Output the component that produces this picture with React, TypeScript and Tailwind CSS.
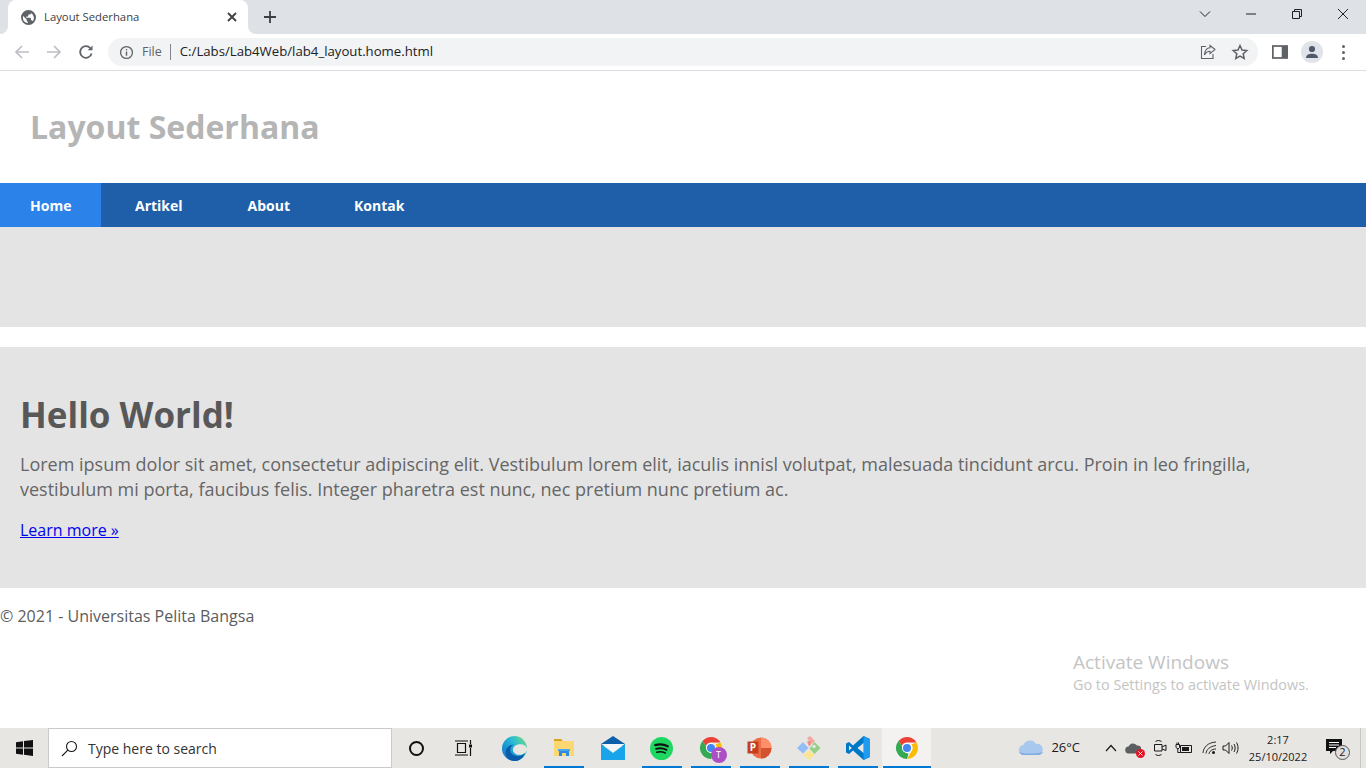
import { useId, type ReactNode } from 'react'

const uiFont = "font-['Open_Sans','Noto_Sans',sans-serif]"

function TabFlare({ flip }: { flip?: boolean }) {
  return (
    <svg width="8" height="8" viewBox="0 0 8 8" className={`absolute bottom-0 ${flip ? 'left-full -scale-x-100' : 'right-full'}`}>
      <path d="M8 0v8H0a8 8 0 0 0 8-8z" fill="#fff" />
    </svg>
  )
}

function TitleBar() {
  return (
    <div className="flex h-[34px] items-end bg-[#dee1e6] pl-2">
      <div className="relative flex h-[34px] w-[240px] items-center rounded-t-lg bg-white pl-[13px] pr-[8px]">
        <TabFlare />
        <TabFlare flip />
        <svg width="15" height="15" viewBox="0 0 16 16" fill="#5f6368">
          <path d="M8 0a8 8 0 1 0 0 16A8 8 0 0 0 8 0zM2 8c0-.6.1-1.2.3-1.7L6 10v1c0 .8.6 1.4 1.300 1.400v1.500A6 6 0 0 1 2 8zm10.600 3.900c-.2-.6-.7-1-1.300-1h-.7V9c0-.4-.3-.7-.7-.7H5.700V7h1.400c.4 0 .7-.3.700-.7V4.900h1.400c.8 0 1.400-.6 1.400-1.400v-.3a6 6 0 0 1 2 8.700z" />
        </svg>
        <span className="ml-2 flex-1 text-[11.300px] text-[#3c4043]">Layout Sederhana</span>
        <svg width="16" height="16" viewBox="0 0 16 16" stroke="#3c4043" strokeWidth="1.800" fill="none">
          <path d="M4 4l8 8M12 4l-8 8" />
        </svg>
      </div>
      <div className="ml-[14px] flex h-[34px] items-center">
        <svg width="16" height="16" viewBox="0 0 16 16" stroke="#3c4043" strokeWidth="1.800" fill="none">
          <path d="M8 2v12M2 8h12" />
        </svg>
      </div>
      <div className="ml-auto flex h-[34px] items-start text-[#3c4043]">
        <WinButton>
          <path d="M1 3.500l5 5 5-5" />
        </WinButton>
        <WinButton>
          <path d="M1 6h10" />
        </WinButton>
        <WinButton>
          <path d="M1.500 3.500h7v7h-7zM3.500 3.500v-2h7v7h-2" />
        </WinButton>
        <WinButton>
          <path d="M1 1l10 10M11 1L1 11" />
        </WinButton>
      </div>
    </div>
  )
}

function WinButton({ children }: { children: ReactNode }) {
  return (
    <div className="flex h-[28px] w-[46px] items-center justify-center">
      <svg width="12" height="12" viewBox="0 0 12 12" fill="none" stroke="#202124" strokeWidth="1">
        {children}
      </svg>
    </div>
  )
}

function ToolbarIcon({ children }: { children: ReactNode }) {
  return <div className="flex h-8 w-8 items-center justify-center">{children}</div>
}

function Toolbar() {
  return (
    <div className="flex h-[37px] items-center border-b border-[#dcdde0] bg-white pl-[6px]">
      <ToolbarIcon>
        <svg width="16" height="16" viewBox="0 0 16 16" fill="none" stroke="#bcbfc3" strokeWidth="1.700">
          <path d="M15 8H2M8 2L2 8l6 6" />
        </svg>
      </ToolbarIcon>
      <ToolbarIcon>
        <svg width="16" height="16" viewBox="0 0 16 16" fill="none" stroke="#bcbfc3" strokeWidth="1.700">
          <path d="M1 8h13M8 2l6 6-6 6" />
        </svg>
      </ToolbarIcon>
      <ToolbarIcon>
        <svg width="16" height="16" viewBox="0 0 16 16" fill="none" stroke="#5f6368" strokeWidth="1.800">
          <path d="M13.600 9.500A5.800 5.800 0 1 1 12.200 4" />
          <path d="M14.500 1.500v4.800H9.700z" fill="#5f6368" stroke="none" />
        </svg>
      </ToolbarIcon>
      <div className="ml-[6px] flex h-7 w-[1150px] items-center rounded-full bg-[#f1f3f4] pl-[11px]">
        <svg width="15" height="15" viewBox="0 0 16 16" fill="none" stroke="#5f6368" strokeWidth="1.400">
          <circle cx="8" cy="8" r="6.300" />
          <path d="M8 7v4.500M8 4.200v1.500" strokeWidth="1.500" />
        </svg>
        <span className="ml-2 text-[12.500px] text-[#5f6368]">File</span>
        <span className="ml-2 h-4 w-px bg-[#80868b]" />
        <span className="ml-[9px] text-[13.200px] text-[#202124]">C:/Labs/Lab4Web/lab4_layout.home.html</span>
        <div className="ml-auto mr-[9px] flex items-center gap-[14px]">
          <svg width="18" height="18" viewBox="0 0 18 18" fill="none" stroke="#5f6368" strokeWidth="1.100">
            <path d="M7 3.500H2.500v12H14V11" />
            <path d="M16 6.500L11 2.500v2.300C7.500 5 5.800 7.800 5.500 12c1.500-2.600 3-3.800 5.500-3.700v2.300z" />
          </svg>
          <svg width="18" height="18" viewBox="0 0 18 18" fill="none" stroke="#5f6368" strokeWidth="1.500">
            <path d="M9 2.500l2 4.500 4.800.5-3.600 3.200 1 4.800L9 13l-4.200 2.500 1-4.800-3.600-3.200L7 7z" />
          </svg>
        </div>
      </div>
      <div className="ml-[14px] flex items-center">
        <svg width="16" height="16" viewBox="0 0 14 14">
          <path d="M0 1h14v12H0z" fill="#5f6368" />
          <path d="M1.500 2.500h7v9h-7z" fill="#fff" />
        </svg>
      </div>
      <div className="ml-[13px] flex h-[22px] w-[22px] items-center justify-center overflow-hidden rounded-full bg-[#e0e3e7]">
        <svg width="16" height="16" viewBox="0 0 16 16" fill="#50596b">
          <circle cx="8" cy="5" r="3.100" />
          <path d="M2 14c0-3 2.800-4.300 6-4.300s6 1.300 6 4.300z" />
        </svg>
      </div>
      <div className="ml-[19px] flex flex-col gap-[3px]">
        <span className="h-[3px] w-[3px] rounded-full bg-[#5f6368]" />
        <span className="h-[3px] w-[3px] rounded-full bg-[#5f6368]" />
        <span className="h-[3px] w-[3px] rounded-full bg-[#5f6368]" />
      </div>
    </div>
  )
}

const navLinks = [
  { label: 'Home', className: 'w-[101px] bg-[#2b83ea] pl-[30px]' },
  { label: 'Artikel', className: 'pl-[34px] pr-[30px]' },
  { label: 'About', className: 'pl-[35px] pr-[32px]' },
  { label: 'Kontak', className: 'pl-[32px]' },
]

function Page() {
  return (
    <div className={`relative flex-1 overflow-hidden bg-white ${uiFont} text-[#5c5c5c]`}>
      <header className="flex h-[112px] items-center pl-[30px]">
        <h1 className="text-[32px] font-bold text-[#b5b5b5]">Layout Sederhana</h1>
      </header>
      <nav className="flex h-11 bg-[#1f5faa]">
        {navLinks.map((link) => (
          <a key={link.label} className={`flex items-center text-[14px] font-bold text-white ${link.className}`}>
            {link.label}
          </a>
        ))}
      </nav>
      <div className="mb-5 h-[100px] bg-[#e4e4e4]" />
      <section className="h-[241px] bg-[#e4e4e4] px-5 pt-[43px]">
        <h2 className="text-[35px] leading-[50px] font-bold text-[#585858]">Hello World!</h2>
        <p className="mt-[12px] text-[18px] leading-[25px] text-[#666]">
          Lorem ipsum dolor sit amet, consectetur adipiscing elit. Vestibulum lorem elit, iaculis innisl volutpat, malesuada tincidunt arcu. Proin in leo fringilla, vestibulum mi porta, faucibus felis. Integer pharetra est nunc, nec pretium nunc pretium ac.
        </p>
        <a className="mt-[17px] block text-[16px] leading-[22px] text-[#0000ee] underline">Learn more »</a>
      </section>
      <footer className="pt-[17px] text-[16px] leading-[22px]">© 2021 - Universitas Pelita Bangsa</footer>
      <div className="absolute left-[1073px] top-[579px] text-[#c4c4c4]">
        <div className="text-[19px] leading-[24px]">Activate Windows</div>
        <div className="mt-[1px] text-[14.400px] leading-[20px]">Go to Settings to activate Windows.</div>
      </div>
    </div>
  )
}

function ChromeLogo({ size = 24 }: { size?: number }) {
  return (
    <svg width={size} height={size} viewBox="0 0 24 24">
      <path d="M12 1a11 11 0 0 1 9.500 5.500H12a5.500 5.500 0 0 0-5.200 3.700L3.700 4.800A11 11 0 0 1 12 1z" fill="#ea4335" />
      <path d="M21.500 6.500A11 11 0 0 1 12 23l4.800-8.200A5.500 5.500 0 0 0 16.500 8.500z" fill="#fbbc04" />
      <path d="M12 23A11 11 0 0 1 3.700 4.800l4.800 8.400a5.500 5.500 0 0 0 5 4.300z" fill="#34a853" />
      <circle cx="12" cy="12" r="5" fill="#fff" />
      <circle cx="12" cy="12" r="4" fill="#4285f4" />
    </svg>
  )
}

function EdgeLogo() {
  const id = useId()
  return (
    <svg width="25" height="25" viewBox="0 0 24 24">
      <defs>
        <linearGradient id={id} x1="1" y1="0.100" x2="0" y2="0.800">
          <stop offset="0" stopColor="#6fe07f" />
          <stop offset="0.450" stopColor="#27b9d6" />
          <stop offset="1" stopColor="#1274cf" />
        </linearGradient>
      </defs>
      <circle cx="12" cy="12" r="12" fill={`url(#${id})`} />
      <path d="M24 12.500c-.3-2.500-3-4.500-6.500-4.500-4 0-7 2.300-7 5.200 0 2.800 2.600 4.800 6 4.800 2.400 0 4.800-.8 6.300-2.200L24 14z" fill="#e8e6e2" />
      <path d="M12 24C6 24 3 19.500 3.500 14.500 4.300 10.500 8 8 11.500 8.500c-2.500 1-4 3.300-3.500 6 .6 3.300 4.500 5.500 9 4.500 2-.4 3.800-1.500 5-3C20.500 21 17 24 12 24z" fill="#0c5bab" />
    </svg>
  )
}

function ExplorerLogo() {
  return (
    <svg width="22" height="24" viewBox="0 0 22 24">
      <path d="M1 3h7l2 2H1z" fill="#d9a21b" />
      <path d="M1 5h20v15H1z" fill="#fcd772" />
      <path d="M6 13h10v7h-3v-3H9v3H6z" fill="#2a8be0" />
      <path d="M5 13h12v2H5z" fill="#4aa8ef" />
    </svg>
  )
}

function MailLogo() {
  return (
    <svg width="24" height="24" viewBox="0 0 24 24">
      <path d="M0 8l12-8 12 8v2H0z" fill="#0c5ea8" />
      <path d="M0 8h24L12 16z" fill="#f3f6f8" />
      <path d="M0 8l12 9 12-9v16H0z" fill="#17a4ea" />
    </svg>
  )
}

function SpotifyLogo() {
  return (
    <svg width="23" height="23" viewBox="0 0 24 24">
      <circle cx="12" cy="12" r="12" fill="#1ed760" />
      <g fill="none" stroke="#111" strokeLinecap="round">
        <path d="M5.500 8.500c4.500-1.300 9-.9 13 1.200" strokeWidth="2.300" />
        <path d="M6.300 12.300c3.800-1 7.500-.7 11 1.100" strokeWidth="1.900" />
        <path d="M7 15.800c3.200-.8 6.200-.5 9 .9" strokeWidth="1.600" />
      </g>
    </svg>
  )
}

function ChromeProfileLogo() {
  return (
    <div className="relative h-6 w-6">
      <ChromeLogo />
      <span className="absolute -bottom-[3px] -right-[4px] flex h-4 w-4 items-center justify-center rounded-full bg-[#ad4fc4] font-['Open_Sans',sans-serif] text-[9px] text-white">
        T
      </span>
    </div>
  )
}

function PowerPointLogo() {
  return (
    <svg width="25" height="24" viewBox="0 0 25 24">
      <circle cx="14" cy="12" r="10.500" fill="#ed6c47" />
      <path d="M14 1.500A10.500 10.500 0 0 1 24.500 12H14z" fill="#ff8f6b" />
      <path d="M14 12h10.500A10.500 10.500 0 0 1 14 22.500z" fill="#d35230" />
      <rect x="0.500" y="5.500" width="11" height="12" fill="#c43e1c" />
      <text x="6" y="15.300" textAnchor="middle" fontFamily="Open Sans, sans-serif" fontWeight="700" fontSize="10" fill="#fff">
        P
      </text>
    </svg>
  )
}

function KrakenLogo() {
  return (
    <svg width="26" height="26" viewBox="0 0 26 26">
      <path d="M11 3l3-2 5 5-3 3z" fill="#f4a6a0" />
      <path d="M7 7l5.500 6L7 18.500 1 13z" fill="#92bdf7" />
      <path d="M18.500 7l6 6-6 6-5-5.500z" fill="#93cf85" />
      <circle cx="18" cy="11.500" r="1.800" fill="#e8e6e2" />
      <path d="M13 15l5.500 5L13 25l-5.500-5z" fill="#fbe58f" />
      <path d="M11 6.500l3-1 1.500 3.500-2.500 2.500z" fill="#ef8f88" />
    </svg>
  )
}

function VsCodeLogo() {
  return (
    <svg width="24" height="24" viewBox="0 0 24 24">
      <path d="M17.500 0L24 3v18l-6.500 3L7 14.500l-4 3.500-3-1.500v-9L3 6l4 3.500z" fill="#0078c8" />
      <path d="M17.500 0L24 3v18l-6.500 3z" fill="#1f9cf0" />
      <path d="M17.500 7l-6 5 6 5z" fill="#e8e6e2" />
      <path d="M3 9.500v5l2.800-2.500z" fill="#e8e6e2" />
    </svg>
  )
}

const taskApps = [
  { key: 'edge', icon: <EdgeLogo />, running: false },
  { key: 'explorer', icon: <ExplorerLogo />, running: true },
  { key: 'mail', icon: <MailLogo />, running: false },
  { key: 'spotify', icon: <SpotifyLogo />, running: true },
  { key: 'chrome-t', icon: <ChromeProfileLogo />, running: true },
  { key: 'powerpoint', icon: <PowerPointLogo />, running: true },
  { key: 'kraken', icon: <KrakenLogo />, running: true },
  { key: 'vscode', icon: <VsCodeLogo />, running: true },
]

function TaskSlot({ children, underline, active }: { children: ReactNode; underline?: boolean; active?: boolean }) {
  return (
    <div className={`relative flex h-10 w-[49px] items-center justify-center ${active ? 'bg-[#f3f2f0]' : ''}`}>
      {children}
      {underline && <span className={`absolute bottom-0 h-[2px] bg-[#0078d4] ${active ? 'left-[1px] right-0' : 'left-[5px] right-[4px]'}`} />}
    </div>
  )
}

function Tray() {
  return (
    <div className="ml-auto flex h-10 items-center text-[#1a1a1a]">
      <svg width="26" height="18" viewBox="0 0 26 18">
        <path d="M6 16a5 5 0 0 1-.5-10A7 7 0 0 1 18 5a5.500 5.500 0 0 1 2.500 11z" fill="#a9c8ee" />
        <path d="M1 13c6 2 17 2 24 0-1 2-3 3-5 3H6c-2 0-4-1-5-3z" fill="#7fabe3" />
      </svg>
      <span className="ml-[7px] text-[13px]">26°C</span>
      <svg className="ml-[25px]" width="12" height="8" viewBox="0 0 12 8" fill="none" stroke="#1a1a1a" strokeWidth="1.200">
        <path d="M1 7l5-5.500L11 7" />
      </svg>
      <div className="relative ml-[8px] h-4 w-[18px]">
        <svg width="16" height="12" viewBox="0 0 16 12" className="mt-[2px]">
          <path d="M4 11.500a3.500 3.500 0 0 1-.5-7A5 5 0 0 1 12 3.500a4 4 0 0 1 1 8z" fill="#5c5f61" />
        </svg>
        <span className="absolute -bottom-[2px] right-[-2px] flex h-[9px] w-[9px] items-center justify-center rounded-full bg-[#e81123]">
          <svg width="5" height="5" viewBox="0 0 5 5" stroke="#fff" strokeWidth="0.900">
            <path d="M.5.500l4 4M4.500.500l-4 4" />
          </svg>
        </span>
      </div>
      <svg className="ml-[10px]" width="14" height="18" viewBox="0 0 14 18" fill="none" stroke="#1a1a1a" strokeWidth="1">
        <path d="M1.500 5.500h7.500v6.500H1.500zM9 8l4-2v5.500L9 10" />
        <path d="M2.500 2.500c2-1.300 4-1.300 6 0M2.500 15.500c2 1.300 4 1.300 6 0" />
      </svg>
      <svg className="ml-[8px]" width="17" height="12" viewBox="0 0 17 12" fill="none" stroke="#1a1a1a" strokeWidth="1">
        <path d="M5.500 3.500h11v7h-11z" />
        <path d="M7 5h7v4H7z" fill="#1a1a1a" stroke="none" />
        <path d="M1 2.500h3.500v3L3 7 1 5.500zM2 .5v2M3.500.5v2M2.800 7v3.500h2.700" />
      </svg>
      <svg className="ml-[10px]" width="16" height="14" viewBox="0 0 16 14" fill="none" stroke="#1a1a1a" strokeWidth="0.900">
        <path d="M1 12C1.500 6 6 1.500 14 1M4 12.500c.5-4 3.500-7 10-8M7 13c.3-2.500 2.500-5 7-5" />
        <circle cx="11.500" cy="11.500" r="1.500" fill="#1a1a1a" stroke="none" />
      </svg>
      <svg className="ml-[4px]" width="17" height="14" viewBox="0 0 17 14" fill="none" stroke="#1a1a1a" strokeWidth="1">
        <path d="M1 5h2.500L7 1.500v11L3.500 9H1z" />
        <path d="M9.500 4.500c1 1.500 1 3.500 0 5M12 3c1.500 2.300 1.500 5.700 0 8M14.500 1.500c2 3.300 2 7.700 0 11" />
      </svg>
      <div className="ml-[1px] flex w-[76px] flex-col items-center text-[11px] leading-[17px]">
        <span>2:17</span>
        <span>25/10/2022</span>
      </div>
      <div className="relative ml-[10px] mr-[18px] h-[20px] w-[22px]">
        <svg width="16" height="16" viewBox="0 0 16 16" className="mt-[1px]">
          <path d="M0 0h16v12H7l-3 3v-3H0z" fill="#111" />
          <path d="M3 3.500h10M3 6h10M3 8.500h7" stroke="#fff" strokeWidth="1" />
        </svg>
        <span className="absolute -right-[2px] bottom-[-2px] flex h-[15px] w-[15px] items-center justify-center rounded-full border border-[#555] bg-[#e0dfdc] text-[11px]">
          2
        </span>
      </div>
    </div>
  )
}

function Taskbar() {
  return (
    <div className={`relative flex h-10 items-center bg-[#e8e6e2] ${uiFont}`}>
      <div className="flex h-10 w-12 items-center justify-center">
        <svg width="17" height="16" viewBox="0 0 17 16" fill="#111">
          <path d="M0 2.300l7-1v6.300H0zM8 1.100L17 0v7.600H8zM0 8.400h7v6.300l-7-1zM8 8.400h9V16l-9-1.200z" />
        </svg>
      </div>
      <div className="flex h-10 w-[344px] items-center border border-[#c9c9c9] bg-white pl-[12px]">
        <svg width="17" height="17" viewBox="0 0 17 17" fill="none" stroke="#1a1a1a" strokeWidth="1.100">
          <circle cx="10.500" cy="6.500" r="5" />
          <path d="M6.800 10.200L1 16" />
        </svg>
        <span className="ml-[10px] text-[14px] text-[#333]">Type here to search</span>
      </div>
      <TaskSlot>
        <span className="mr-[1px] h-[15px] w-[15px] rounded-full border-2 border-[#111]" />
      </TaskSlot>
      <TaskSlot>
        <svg className="mr-[4px]" width="17" height="16" viewBox="0 0 17 16" fill="none" stroke="#111" strokeWidth="1.200">
          <path d="M2.500 3.500h8v9h-8zM0 1h13M0 15h13M15.500 0v4M15.500 8v8" />
          <path d="M14 4.500h3v3h-3z" fill="#111" stroke="none" />
        </svg>
      </TaskSlot>
      {taskApps.map((app) => (
        <TaskSlot key={app.key} underline={app.running}>
          {app.icon}
        </TaskSlot>
      ))}
      <TaskSlot underline active>
        <ChromeLogo />
      </TaskSlot>
      <Tray />
      <span className="absolute right-[5px] top-0 h-10 w-px bg-[#c8c7c4]" />
    </div>
  )
}

export default function App() {
  return (
    <div className="flex h-screen flex-col overflow-hidden bg-white font-['Open_Sans',sans-serif]">
      <TitleBar />
      <Toolbar />
      <Page />
      <Taskbar />
    </div>
  )
}
